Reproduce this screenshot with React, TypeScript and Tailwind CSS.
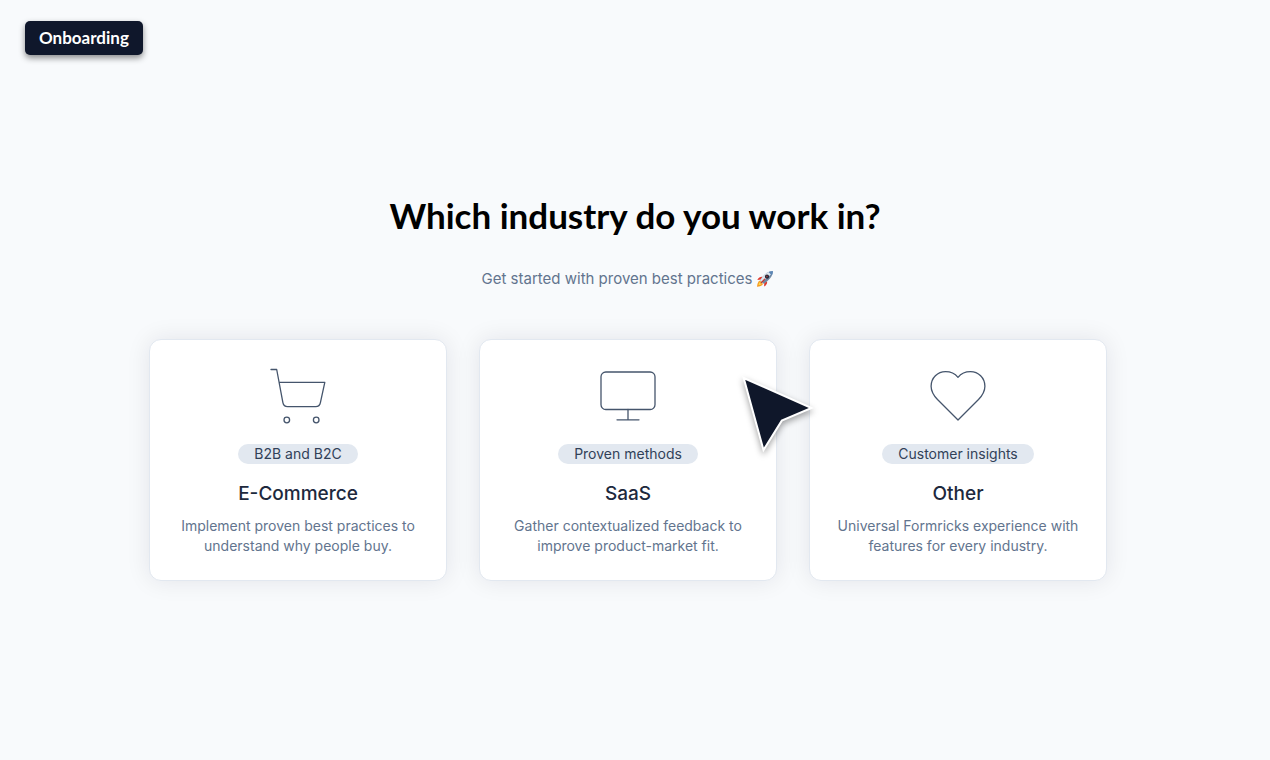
import { useState } from "react";
import type { ReactNode } from "react";

interface Industry {
  id: string;
  badge: string;
  title: string;
  description: string;
  icon: ReactNode;
}

function CartIcon() {
  return (
    <svg viewBox="0 0 60 60" className="h-[60px] w-[60px]" fill="none" stroke="currentColor" strokeWidth="1.3" strokeLinecap="round" aria-hidden="true">
      <path d="M3 5.500h5.700l6.200 33.100c.5 2.700 2 4 4.700 4h28.100c2.700 0 4.200-1.300 4.700-4l4.400-20.200H11.200" strokeLinejoin="round" />
      <circle cx="18.800" cy="56" r="2.800" />
      <circle cx="48.200" cy="56" r="2.800" />
    </svg>
  );
}

function MonitorIcon() {
  return (
    <svg viewBox="0 0 60 60" className="h-[60px] w-[60px]" fill="none" stroke="currentColor" strokeWidth="1.3" strokeLinecap="round" aria-hidden="true">
      <rect x="3" y="8" width="54" height="37.500" rx="4.800" />
      <path d="M30 45.500v10.300M19 55.800h22" />
    </svg>
  );
}

function HeartIcon() {
  return (
    <svg viewBox="0 0 60 60" className="h-[60px] w-[60px]" fill="none" stroke="currentColor" strokeWidth="1.3" strokeLinejoin="round" aria-hidden="true">
      <path d="M30 56 9.500 35.500C5.500 31.300 3.100 27.300 3.100 22.200 3.100 13.700 9.700 7.600 17.500 7.600c5 0 9.300 1.800 12.500 5.700 3.200-3.900 7.500-5.700 12.500-5.700 7.800 0 14.400 6.100 14.400 14.600 0 5.100-2.400 9.100-6.400 13.300Z" />
    </svg>
  );
}

function Rocket() {
  return (
    <svg viewBox="0 0 18 18" className="h-[18px] w-[18px]" role="img" aria-label="rocket">
      <path d="M6.500 6.800C4.500 6.500 2.600 7.500 1.300 10l3.700-.4ZM11 11.300c.5 2-.5 4-2.900 5.300l.2-3.900Z" fill="#e0382c" />
      <path d="M4 10.500C1.900 11.500 1.300 14 1 16.700c2.900-.2 5-1 6-2.800Z" fill="#f59b23" />
      <path d="M4.500 11.600c-1.200.8-1.800 2-2 3.500 1.500-.1 2.800-.7 3.400-1.700Z" fill="#fbd84b" />
      <path d="M16.900 1C12.500 1 8 3.800 4.200 10.400l3.300 3.300C13.300 10.300 16.900 6 16.900 1Z" fill="#6f87a3" />
      <path d="M16.900 1C12.500 1 8 3.800 4.200 10.400l1.300 1.300C10.500 9 14.500 5.600 16.900 1Z" fill="#dde5ed" />
      <path d="M16.900 1c-1.500 0-3 .3-4.400 1l3.400 3.400c.7-1.400 1-2.900 1-4.400Z" fill="#5b86b5" />
      <circle cx="11" cy="6.700" r="2.100" fill="#1b2433" />
      <circle cx="10.900" cy="6.600" r="1" fill="#8c3a3f" />
      <path d="m5 12.900 3.700-3.800" stroke="#c93228" strokeWidth="1.200" strokeLinecap="round" />
    </svg>
  );
}

function Pointer() {
  return (
    <svg viewBox="0 0 80 84" className="pointer-events-none absolute top-[34px] -right-[42px] z-10 h-[84px] w-[80px] drop-shadow-[0_3px_3px_rgba(0,0,0,0.35)]" aria-hidden="true">
      <path d="M4.700 5 72.500 35 42.800 47.600 24.500 77Z" fill="#0f172a" stroke="white" strokeWidth="2" />
    </svg>
  );
}

const industries: Industry[] = [
  { id: "ecommerce", badge: "B2B and B2C", title: "E-Commerce", description: "Implement proven best practices to understand why people buy.", icon: <CartIcon /> },
  { id: "saas", badge: "Proven methods", title: "SaaS", description: "Gather contextualized feedback to improve product-market fit.", icon: <MonitorIcon /> },
  { id: "other", badge: "Customer insights", title: "Other", description: "Universal Formricks experience with features for every industry.", icon: <HeartIcon /> },
];

export default function App() {
  const [selected, setSelected] = useState("");

  return (
    <div className="min-h-screen bg-slate-50 font-['Inter',sans-serif]">
      <header className="flex px-[25px] pt-[21px]">
        <div className="rounded-[5px] bg-slate-900 px-[14px] py-[5px] font-['Lato',sans-serif] text-[17px] leading-6 font-bold text-white shadow-[0_3px_6px_rgba(0,0,0,0.45)]">
          Onboarding
        </div>
      </header>

      <main className="px-6 pt-[140px] pb-12">
        <h1 className="text-center font-['Lato',sans-serif] text-[35px] leading-10 font-bold text-black">
          Which industry do you work in?
        </h1>

        <div className="pr-3.5">
          <p className="mt-8 flex items-center justify-center gap-1 text-[15px] leading-6 text-slate-500">
            Get started with proven best practices
            <Rocket />
          </p>

          <div className="mx-auto mt-12 grid max-w-[958px] grid-cols-1 gap-8 md:grid-cols-3">
            {industries.map((item) => (
              <div key={item.id} className="relative">
                <button
                  type="button"
                  aria-pressed={selected === item.id}
                  onClick={() => setSelected(item.id)}
                  className="flex h-full w-full flex-col items-center rounded-xl border border-slate-200 bg-white px-6 py-6 text-center shadow-[0_0_24px_rgba(15,23,42,0.09)]"
                >
                  <span className="text-slate-600">{item.icon}</span>
                  <span className="mt-5 rounded-full bg-slate-200 px-4 text-[14px] leading-5 text-slate-700">{item.badge}</span>
                  <span className="mt-4 text-[19px] leading-7 font-medium text-slate-800">{item.title}</span>
                  <span className="mt-2 text-[14px] leading-5 text-slate-500">{item.description}</span>
                </button>
                {item.id === "saas" && <Pointer />}
              </div>
            ))}
          </div>
        </div>
      </main>
    </div>
  );
}
